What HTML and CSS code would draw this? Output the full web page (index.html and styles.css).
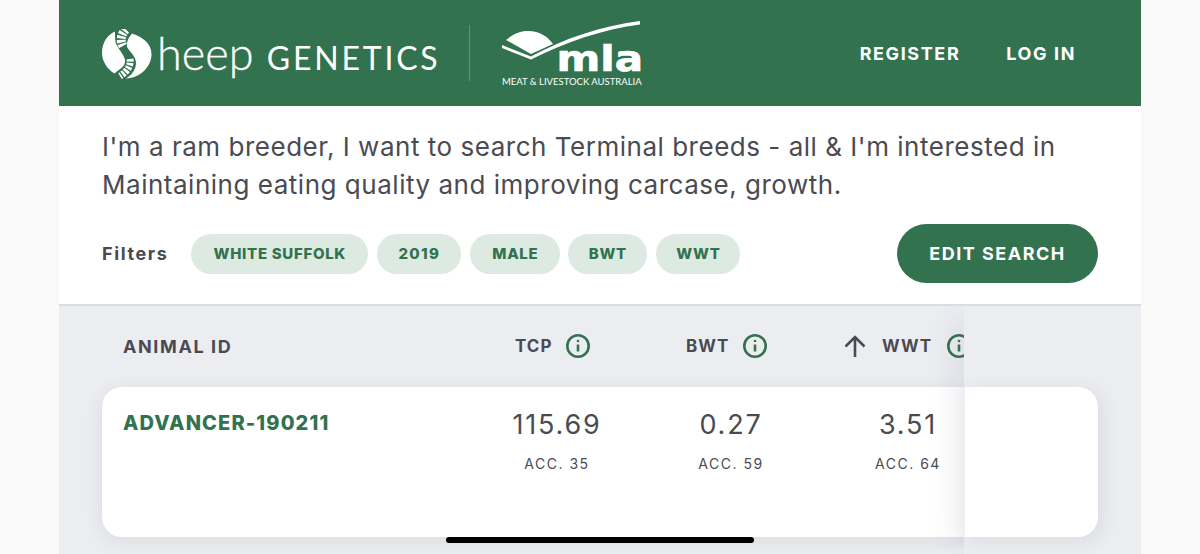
FILE: index.html
```html
<!DOCTYPE html>
<html lang="en">
<head>
  <meta charset="UTF-8">
  <meta name="viewport" content="width=device-width, initial-scale=1.0">
  <title>Sheep Genetics</title>
  <link rel="stylesheet" href="styles.css">
</head>
<body>
  <div class="page">
    <header class="topbar">
      <div class="brand">
        <svg class="sheep-mark" viewBox="0 0 50 50" width="50" height="50">
          <path fill="#fff" d="M13 2.500C5 6 0 14 0 24c0 8 5 16 12.500 20.500C18 40 24 37 23 31c-1-6-8-12-9.500-18-.5-4-.5-7-.5-10.500z"/>
          <path fill="#fff" d="M30 4.500C41 8 49.500 15 49.500 25c0 13-11.500 24-25.500 24.500C30 46 34 40 34 34c0-7-7-12-9-16-1-5 2-10 5-13.500z"/>
          <path fill="none" stroke="#fff" stroke-width="9" stroke-dasharray="2.600 1.300" d="M24 .5C19 5 17.500 12 21.500 18"/>
          <path fill="none" stroke="#fff" stroke-width="7" stroke-dasharray="2.600 1.300" d="M28 30c1 6-2 12-10 17"/>
        </svg>
        <span class="brand-name">heep <span class="brand-sub">GENETICS</span></span>
      </div>
      <div class="divider"></div>
      <div class="mla">
        <svg class="mla-mark" viewBox="0 0 142 40" width="142" height="40">
          <path fill="#fff" d="M6 20c8-7 16-9 22-9 12 0 20 6 25 13L31 34z"/>
          <path fill="#fff" d="M2 25l29 11.500C65 18 100 6.500 140 1v3.500C100 10 66 22 31 39.500L2 28z"/>
        </svg>
        <span class="mla-word">mla</span>
        <span class="mla-full">MEAT &amp; LIVESTOCK AUSTRALIA</span>
      </div>
      <nav class="topnav">
        <a href="#">REGISTER</a>
        <a href="#">LOG IN</a>
      </nav>
    </header>

    <section class="summary">
      <p class="sentence">I'm a ram breeder, I want to search Terminal breeds - all &amp; I'm interested in Maintaining eating quality and improving carcase, growth.</p>
      <div class="filter-row">
        <span class="filter-label">Filters</span>
        <span class="chip chip-breed">WHITE SUFFOLK</span>
        <span class="chip chip-year">2019</span>
        <span class="chip chip-sex">MALE</span>
        <span class="chip chip-bwt">BWT</span>
        <span class="chip chip-wwt">WWT</span>
        <button class="edit-btn">EDIT SEARCH</button>
      </div>
    </section>

    <section class="results">
      <div class="head-row">
        <div class="col-id">ANIMAL ID</div>
        <div class="col col-tcp">TCP
          <svg class="info" viewBox="0 0 24 24" width="24" height="24"><circle cx="12" cy="12" r="10.700"/><path d="M12 10.500v7"/><circle class="dot" cx="12" cy="7" r="1.300"/></svg>
        </div>
        <div class="col col-bwt">BWT
          <svg class="info" viewBox="0 0 24 24" width="24" height="24"><circle cx="12" cy="12" r="10.700"/><path d="M12 10.500v7"/><circle class="dot" cx="12" cy="7" r="1.300"/></svg>
        </div>
        <div class="col col-wwt">
          <svg class="arrow" viewBox="0 0 24 24" width="24" height="24"><path d="M12 23V3M2.500 12.500L12 3l9.500 9.500"/></svg>
          WWT
          <svg class="info" viewBox="0 0 24 24" width="24" height="24"><circle cx="12" cy="12" r="10.700"/><path d="M12 10.500v7"/><circle class="dot" cx="12" cy="7" r="1.300"/></svg>
        </div>
      </div>
      <div class="card">
        <a class="animal-id" href="#">ADVANCER-190211</a>
        <div class="val val-tcp"><b>115.69</b><span>ACC. 35</span></div>
        <div class="val val-bwt"><b>0.27</b><span>ACC. 59</span></div>
        <div class="val val-wwt"><b>3.51</b><span>ACC. 64</span></div>
      </div>
      <div class="sticky-col">
        <div class="sticky-card"></div>
      </div>
    </section>
  </div>
  <div class="home-bar"></div>
</body>
</html>
```

FILE: styles.css
```css
* { box-sizing: border-box; }
html, body { height: 100%; }
body { margin: 0; background: #f9f9fa; font-family: Inter, "Liberation Sans", sans-serif; color: #4a4b52; overflow: hidden; }
.page { width: 1082px; height: 554px; margin: 0 auto; display: flex; flex-direction: column; }

.topbar { height: 106px; flex: none; background: #33724f; color: #fff; display: flex; align-items: center; padding: 0 65px 0 43px; }
.brand { display: flex; align-items: center; width: 337px; margin-top: 1px; }
.sheep-mark { flex: none; }
.brand-name { font-family: Lato, sans-serif; font-weight: 300; font-size: 45px; line-height: 50px; margin-left: 5px; margin-top: 3px; white-space: nowrap; -webkit-text-stroke: .3px #fff; }
.brand-sub { font-size: 32px; font-weight: 400; letter-spacing: 2.800px; margin-left: 1px; -webkit-text-stroke: 0; }
.divider { width: 1px; height: 56px; background: #5f9479; margin-left: 30px; }
.mla { position: relative; width: 140px; height: 68px; margin-left: 32px; margin-top: 2px; }
.mla-mark { display: block; margin-left: -2px; }
.mla-word { position: absolute; right: -1px; top: 25px; font-family: "DejaVu Sans", sans-serif; font-weight: 700; font-size: 35px; line-height: 28px; transform: scaleX(1.2); transform-origin: right center; -webkit-text-stroke: .7px #fff; }
.mla-full { position: absolute; left: 0; bottom: 0; font-family: Lato, sans-serif; font-size: 9.500px; line-height: 12px; white-space: nowrap; font-weight: 400; }
.topnav { margin-left: auto; display: flex; gap: 46px; }
.topnav a { color: #fff; text-decoration: none; font-weight: 700; font-size: 18px; letter-spacing: 1.600px; }

.summary { height: 200px; flex: none; background: #fff; border-bottom: 2px solid #dcdde2; padding: 22px 43px 0; }
.sentence { margin: 0; font-size: 26px; line-height: 38px; color: #4a4b52; letter-spacing: .52px; width: 990px; }
.filter-row { display: flex; align-items: center; gap: 9px; margin-top: 20px; }
.filter-label { font-weight: 700; font-size: 18px; letter-spacing: 1.600px; margin-right: 14px; }
.chip { height: 40px; border-radius: 20px; background: #dceae2; color: #33724f; font-weight: 800; font-size: 15px; letter-spacing: .7px; display: flex; align-items: center; justify-content: center; }
.chip-breed { width: 177px; }
.chip-year { width: 84px; letter-spacing: 1.300px; }
.chip-sex { width: 90px; }
.chip-bwt { width: 79px; }
.chip-wwt { width: 84px; }
.chip-sex + .chip-bwt { margin-left: -1px; }
.edit-btn { margin-left: auto; height: 59px; width: 201px; border: none; border-radius: 30px; background: #33724f; color: #fff; font: 700 18px Inter, sans-serif; letter-spacing: 1.500px; }

.results { flex: 1; background: #ecedf1; position: relative; padding: 0 43px; overflow: hidden; }
.head-row { height: 81px; display: flex; align-items: center; font-weight: 700; font-size: 17px; letter-spacing: 1px; position: relative; }
.col-id { margin-left: 21px; font-size: 18px; letter-spacing: 1.600px; }
.col { position: absolute; top: 28px; display: flex; align-items: center; gap: 14px; white-space: nowrap; }
.col-tcp { left: 413px; }
.col-bwt { left: 584px; }
.col-wwt { left: 741px; gap: 15px; }
.info { flex: none; fill: none; stroke: #33724f; stroke-width: 2.600; }
.info .dot { fill: #33724f; stroke: none; }
.arrow { flex: none; fill: none; stroke: #4a4b52; stroke-width: 2.600; }

.card { height: 150px; background: #fff; border-radius: 20px; box-shadow: 0 4px 18px rgba(60, 64, 90, .1); position: relative; }
.animal-id { position: absolute; left: 21px; top: 24px; color: #33724f; font-weight: 800; font-size: 20px; letter-spacing: 1.130px; text-decoration: none; }
.val { position: absolute; top: 22px; width: 120px; display: flex; flex-direction: column; align-items: center; gap: 14px; }
.val b { font-weight: 400; font-size: 27px; line-height: 32px; letter-spacing: 1.800px; }
.val span { font-size: 14px; line-height: 18px; letter-spacing: 1.500px; }
.val-tcp { left: 395px; }
.val-bwt { left: 569px; }
.val-wwt { left: 746px; }

.sticky-col { position: absolute; left: 905px; top: 0; bottom: 0; width: 177px; background: #ecedf1; box-shadow: -24px 0 24px -12px rgba(70, 74, 100, .08); }
.sticky-card { position: absolute; left: 0; right: 43px; top: 81px; height: 150px; background: #fff; border-radius: 0 20px 20px 0; box-shadow: 4px 4px 18px rgba(60, 64, 90, .1); border-left: 1px solid #eef0f3; }
.home-bar { position: fixed; left: 446px; bottom: 11px; width: 308px; height: 6px; border-radius: 3px; background: #000; }
```
